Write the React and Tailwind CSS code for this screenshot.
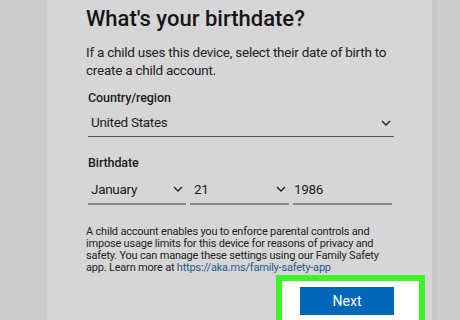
// App.jsx — "What's your birthdate?" setup step
import React from 'react'

function Chevron() {
  return (
    <svg width="10" height="6" viewBox="0 0 10 6" className="shrink-0">
      <path d="M1 1l4 4 4-4" fill="none" stroke="#222" strokeWidth="1.4" />
    </svg>
  )
}

export default function App() {
  return (
    <div className="flex w-[460px] h-[320px] overflow-hidden bg-[#cdcdcd] font-['Roboto',sans-serif] text-[#1b1b1b]">
      <div className="w-[47px] shrink-0 bg-[#cbcbcb]" />

      {/* Card */}
      <div className="w-[385px] shrink-0 bg-[#d6d6d6] pl-[39px] pr-[38px] pt-[3px]">
        <h1 className="text-[22px] font-medium leading-[32px] text-[#161616]">What's your birthdate?</h1>
        <p className="mt-[8px] text-[13.5px] tracking-[-0.25px] leading-[18px] text-[#222]">
          If a child uses this device, select their date of birth to<br />
          create a child account.
        </p>

        {/* Country */}
        <p className="mt-[11px] ml-[2px] text-[12.5px] tracking-[-0.1px] font-medium leading-[16px]">Country/region</p>
        <div className="mt-[5px] ml-[2px] flex items-center justify-between border-b-[1.5px] border-[#555] pl-[3px] pr-[3px] h-[26px] pb-[2px]">
          <span className="text-[13.5px] tracking-[-0.3px]">United States</span>
          <Chevron />
        </div>

        {/* Birthdate */}
        <p className="mt-[18px] ml-[2px] text-[12.5px] tracking-[-0.1px] font-medium leading-[16px]">Birthdate</p>
        <div className="mt-[6px] ml-[2px] flex gap-[4px]">
          <div className="w-[98px] flex items-center justify-between border-b-2 border-[#8a8a8a] pl-[3px] pr-[3px] h-[28px] pb-[2px]">
            <span className="text-[13.5px] tracking-[-0.3px]">January</span>
            <Chevron />
          </div>
          <div className="w-[99px] flex items-center justify-between border-b-2 border-[#8a8a8a] pl-[4px] pr-[3px] h-[28px] pb-[2px]">
            <span className="text-[13.5px] tracking-[-0.3px]">21</span>
            <Chevron />
          </div>
          <div className="w-[99px] flex items-center border-b-2 border-[#8a8a8a] pl-[1px] h-[28px] pb-[2px]">
            <span className="text-[13.5px] tracking-[-0.3px]">1986</span>
          </div>
        </div>

        {/* Note */}
        <p className="mt-[21px] text-[11px] tracking-[-0.2px] leading-[12px] text-[#222]">
          A child account enables you to enforce parental controls and<br />
          impose usage limits for this device for reasons of privacy and<br />
          safety. You can manage these settings using our Family Safety<br />
          app. Learn more at <span className="text-[#1f5a8c]">https://aka.ms/family-safety-app</span>
        </p>

        {/* Next, highlighted */}
        <div className="mt-[1px] flex justify-end -mr-[31px]">
          <div className="w-[149px] h-[60px] border-[6px] border-[#3df52a] bg-white pt-[6px] pl-[18px]">
            <button className="w-[94px] h-[28px] bg-[#0067b8] text-white text-[14px]">Next</button>
          </div>
        </div>
      </div>

      <div className="w-[5px] shrink-0 bg-[#c6c6c6]" />
      <div className="flex-1 bg-[#cdcdcd]" />
    </div>
  )
}
